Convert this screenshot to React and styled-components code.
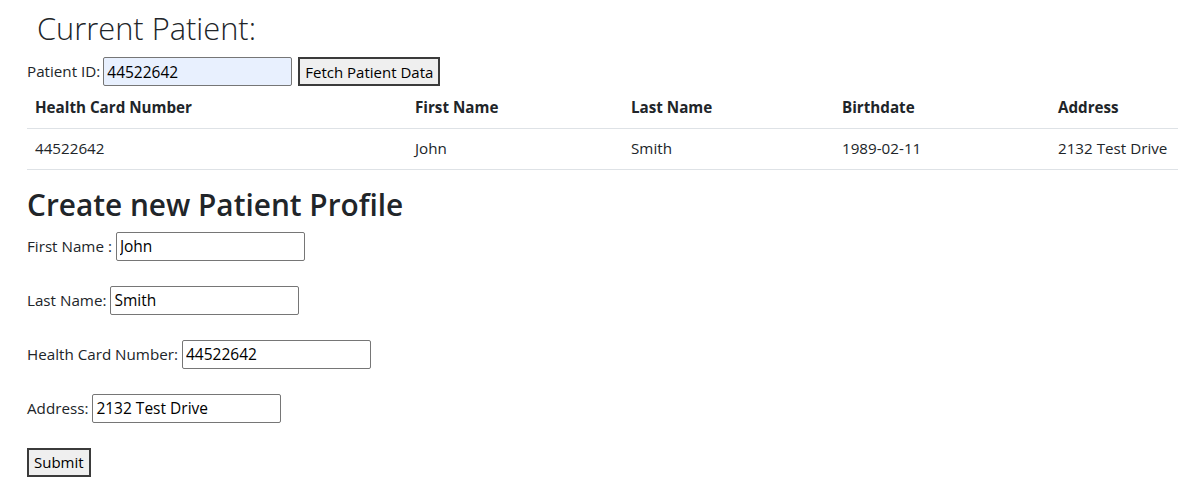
import React from "react";
import styled, { createGlobalStyle } from "styled-components";

const Global = createGlobalStyle`
  html, body { margin: 0; padding: 0; background: #fff; }
  body {
    font-family: "Open Sans", "Noto Sans", sans-serif;
    font-size: 15.2px;
    line-height: 1.5;
    color: #212529;
  }
  * { box-sizing: border-box; }
`;

const Page = styled.div`
  padding: 0 0 0 27px;
  width: 1178px;
`;

const Title = styled.h1`
  margin: 0 0 0 10px;
  font-size: 30.8px;
  font-weight: 300;
  line-height: 57px;
`;

const FetchRow = styled.div`
  display: flex;
  align-items: center;
  gap: 3px;
  height: 29px;
`;

const Label = styled.label`
  font-size: 15.2px;
  white-space: nowrap;
`;

const Input = styled.input`
  width: 189px;
  height: 29px;
  padding: 1px 3px;
  border: 1px solid #767676;
  border-radius: 2px;
  font-family: inherit;
  font-size: 15.5px;
  color: #000;
  background: ${(p) => (p.$filled ? "#e8f0fe" : "#fff")};
  outline: none;
`;

const Button = styled.button`
  height: 29px;
  padding: 0 5px;
  margin-left: ${(p) => p.$ml || 0}px;
  border: 2px solid #3b3b3b;
  border-radius: 0;
  background: #efefef;
  font-family: inherit;
  font-size: 15px;
  color: #000;
  cursor: pointer;
`;

const Table = styled.table`
  width: 1151px;
  border-collapse: collapse;
  margin: 1px 0 16px 0;
`;

const Th = styled.th`
  text-align: left;
  font-weight: 700;
  padding: 8px;
  height: 41px;
  white-space: nowrap;
  border-bottom: 1px solid #dee2e6;
  width: ${(p) => p.$w}px;
`;

const Td = styled.td`
  padding: 8px;
  height: 41px;
  white-space: nowrap;
  border-bottom: 1px solid #dee2e6;
`;

const Heading = styled.h2`
  margin: 0 0 8px 0;
  font-size: 29.8px;
  font-weight: 600;
  line-height: 38px;
`;

const Form = styled.form`
  display: flex;
  flex-direction: column;
  align-items: flex-start;
  gap: 25px;
`;

const FieldRow = styled.div`
  display: flex;
  align-items: center;
  gap: 4px;
`;

const cols = [
  { key: "hc", label: "Health Card Number", w: 380 },
  { key: "fn", label: "First Name", w: 216 },
  { key: "ln", label: "Last Name", w: 211 },
  { key: "bd", label: "Birthdate", w: 216 },
  { key: "ad", label: "Address", w: 128 },
];

const row = { hc: "44522642", fn: "John", ln: "Smith", bd: "1989-02-11", ad: "2132 Test Drive" };

const fields = [
  { label: "First Name :", value: "John" },
  { label: "Last Name:", value: "Smith" },
  { label: "Health Card Number:", value: "44522642" },
  { label: "Address:", value: "2132 Test Drive" },
];

export default function App() {
  return (
    <Page>
      <Global />
      <Title>Current Patient:</Title>
      <FetchRow>
        <Label>Patient ID:</Label>
        <Input $filled defaultValue="44522642" />
        <Button $ml={3}>Fetch Patient Data</Button>
      </FetchRow>
      <Table>
        <thead>
          <tr>
            {cols.map((c) => (
              <Th key={c.key} $w={c.w}>{c.label}</Th>
            ))}
          </tr>
        </thead>
        <tbody>
          <tr>
            {cols.map((c) => (
              <Td key={c.key}>{row[c.key]}</Td>
            ))}
          </tr>
        </tbody>
      </Table>
      <Heading>Create new Patient Profile</Heading>
      <Form onSubmit={(e) => e.preventDefault()}>
        {fields.map((f) => (
          <FieldRow key={f.label}>
            <Label>{f.label}</Label>
            <Input defaultValue={f.value} />
          </FieldRow>
        ))}
        <Button type="submit">Submit</Button>
      </Form>
    </Page>
  );
}
